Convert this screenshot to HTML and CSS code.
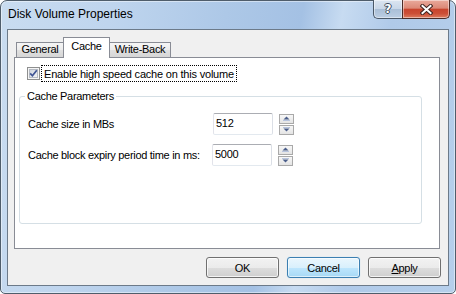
FILE: index.html
```html
<!DOCTYPE html>
<html lang="en">
<head>
<meta charset="utf-8">
<title>Disk Volume Properties</title>
<link rel="stylesheet" href="styles.css">
</head>
<body>
<div class="window">
  <div class="titlebar">
    <span class="title">Disk Volume Properties</span>
    <div class="caption">
      <div class="cbtn help"><span class="q">?</span></div>
      <div class="cbtn close">
        <svg width="13" height="11" viewBox="0 0 13 11">
          <path d="M2.5 2 L10.5 9 M10.5 2 L2.5 9" stroke="#3e2420" stroke-width="4" stroke-linecap="square" fill="none"/>
          <path d="M2.5 2 L10.5 9 M10.5 2 L2.5 9" stroke="#ffffff" stroke-width="2" stroke-linecap="square" fill="none"/>
        </svg>
      </div>
    </div>
  </div>
  <div class="client">
    <div class="tabctl">
      <div class="tabs">
        <div class="tab general">General</div>
        <div class="tab sel">Cache</div>
        <div class="tab wb">Write-Back</div>
      </div>
      <div class="page">
        <div class="check">
          <span class="cb">
            <svg width="13" height="13" viewBox="0 0 13 13">
              <defs>
                <linearGradient id="cbg" x1="0" y1="0" x2="1" y2="1">
                  <stop offset="0" stop-color="#cdd3dc"/>
                  <stop offset="1" stop-color="#f4f5f7"/>
                </linearGradient>
              </defs>
              <rect x="0.5" y="0.5" width="12" height="12" fill="#f5f5f5" stroke="#8e8f8f"/>
              <rect x="2.5" y="2.5" width="8" height="8" fill="url(#cbg)" stroke="#b5bac3"/>
              <path d="M3.2 6.4 L5.4 8.8 L9.8 3.2" stroke="#3f5494" stroke-width="1.7" fill="none"/>
            </svg>
          </span>
          <span class="cb-label">Enable high speed cache on this volume</span>
        </div>
        <div class="group">
          <span class="group-title">Cache Parameters</span>
          <div class="row">
            <span class="lbl">Cache size in MBs</span>
            <span class="edit">512</span>
            <div class="spin">
              <span class="spin-btn">
                <svg width="7" height="5" viewBox="0 0 7 5"><path d="M0.5 3.5 L3.5 0.5 L6.5 3.5 Z" fill="#4b5e8a"/><rect x="0" y="4" width="7" height="1" fill="#b7c4de"/></svg>
              </span>
              <span class="spin-btn">
                <svg width="7" height="5" viewBox="0 0 7 5"><rect x="0" y="0" width="7" height="1" fill="#b7c4de"/><path d="M0.5 1.5 L6.5 1.5 L3.5 4.5 Z" fill="#4b5e8a"/></svg>
              </span>
            </div>
          </div>
          <div class="row r2">
            <span class="lbl">Cache block expiry period time in ms:</span>
            <span class="edit">5000</span>
            <div class="spin">
              <span class="spin-btn">
                <svg width="7" height="5" viewBox="0 0 7 5"><path d="M0.5 3.5 L3.5 0.5 L6.5 3.5 Z" fill="#4b5e8a"/><rect x="0" y="4" width="7" height="1" fill="#b7c4de"/></svg>
              </span>
              <span class="spin-btn">
                <svg width="7" height="5" viewBox="0 0 7 5"><rect x="0" y="0" width="7" height="1" fill="#b7c4de"/><path d="M0.5 1.5 L6.5 1.5 L3.5 4.5 Z" fill="#4b5e8a"/></svg>
              </span>
            </div>
          </div>
        </div>
      </div>
    </div>
    <div class="buttons">
      <span class="btn">OK</span>
      <span class="btn default">Cancel</span>
      <span class="btn"><span class="u">A</span>pply</span>
    </div>
  </div>
</div>
</body>
</html>
```
FILE: styles.css
```css
* { box-sizing: border-box; }
html, body { margin: 0; padding: 0; background: #ffffff; }
body {
  font-family: "Liberation Sans", Arial, sans-serif;
  font-size: 11px;
  letter-spacing: -0.3px;
  color: #000;
}

.window {
  width: 456px;
  height: 294px;
  border: 1px solid #4f5d6b;
  border-radius: 7px 7px 5px 5px;
  background: linear-gradient(100deg, #c9dcf0 0%, #bfd5ee 22%, #adc8e7 45%, #a4c1e4 60%, #c7dbf1 68%, #b0cae9 78%, #b6cfeb 100%);
  box-shadow: inset 0 0 0 1px rgba(255,255,255,0.45);
  padding: 0 6px 7px 6px;
  display: flex;
  flex-direction: column;
}

.titlebar {
  height: 28px;
  display: flex;
  align-items: flex-start;
  flex: none;
}
.title {
  margin: 6px 0 0 1px;
  font-size: 12px;
  line-height: 15px;
  letter-spacing: 0;
}
.caption {
  margin: -1px -1px 0 auto;
  display: flex;
}
.cbtn {
  height: 19px;
  border: 1px solid #4a5868;
  border-top: 0;
  display: flex;
  align-items: center;
  justify-content: center;
  box-shadow: inset 0 0 0 1px rgba(255,255,255,0.45);
}
.help {
  width: 29px;
  border-right: 0;
  border-radius: 0 0 0 5px;
  background: linear-gradient(#dbe5f1 0%, #c9d7e8 48%, #aabfd7 52%, #bccee3 100%);
}
.q {
  font-family: "DejaVu Sans", sans-serif;
  font-weight: bold;
  font-size: 12px;
  line-height: 12px;
  color: #fff;
  letter-spacing: 0;
  text-shadow: 1px 0 #3d4b5c, -1px 0 #3d4b5c, 0 1px #3d4b5c, 0 -1px #3d4b5c;
}
.close {
  width: 48px;
  border-radius: 0 0 5px 0;
  border-color: #4a2c28;
  background: linear-gradient(#e9aa9c 0%, #dc8977 45%, #c8452e 52%, #cc4f37 75%, #dd7c5f 100%);
}

.client {
  height: 257px;
  border: 1px solid #6c7a89;
  background: #f0f0f0;
  display: flex;
  flex-direction: column;
  flex: none;
}

.tabctl {
  margin: 7px 0 0 6px;
  width: 426px;
}
.tabs {
  display: flex;
  align-items: flex-end;
  height: 20px;
  padding-left: 2px;
}
.tab {
  height: 15px;
  border: 1px solid #898c95;
  border-bottom: 0;
  background: linear-gradient(#f5f5f5 0%, #ececec 50%, #e0e0e0 51%, #d6d6d6 100%);
  text-align: center;
  line-height: 13px;
}
.tab.general { width: 47px; border-right: 0; }
.tab.sel {
  width: 47px;
  height: 21px;
  margin-bottom: -1px;
  padding-top: 2px;
  background: #ffffff;
  position: relative;
  z-index: 1;
}
.tab.wb { width: 61px; border-left: 0; }

.page {
  height: 192px;
  border: 1px solid #898c95;
  background: #ffffff;
  display: flex;
  flex-direction: column;
}

.check {
  display: flex;
  align-items: center;
  margin: 7px 0 0 12px;
}
.cb { width: 13px; height: 13px; margin-right: 1px; display: flex; }
.cb-label {
  border: 1px dotted #000;
  padding: 1px 2px 0 2px;
  line-height: 14px;
  letter-spacing: -0.2px;
}

.group {
  margin: 14px 0 0 4px;
  width: 403px;
  height: 128px;
  border: 1px solid #d5dfe5;
  border-radius: 3px;
  display: flex;
  flex-direction: column;
  padding-left: 8px;
}
.group-title {
  align-self: flex-start;
  margin: -7px 0 0 -3px;
  padding: 0 2px;
  background: #ffffff;
  line-height: 13px;
}
.row {
  display: flex;
  align-items: center;
  height: 22px;
  margin-top: 10px;
}
.row + .row { margin-top: 9px; }
.lbl { width: 185px; line-height: 13px; }
.r2 .lbl { width: 184px; }
.edit {
  width: 60px;
  height: 22px;
  border: 1px solid;
  border-color: #abadb3 #dbdfe6 #e3e9ef #e2e3ea;
  border-radius: 2px;
  padding-left: 2px;
  line-height: 19px;
  background: #fff;
}
.spin {
  margin-left: 6px;
  display: flex;
  flex-direction: column;
  gap: 1px;
}
.spin-btn {
  width: 15px;
  height: 10px;
  border: 1px solid #a9a9a9;
  background: linear-gradient(#f7f7f7, #e4e4e4);
  display: flex;
  align-items: center;
  justify-content: center;
}

.buttons {
  display: flex;
  justify-content: flex-end;
  gap: 8px;
  margin: 8px 7px 0 0;
}
.btn {
  width: 73px;
  height: 21px;
  border: 1px solid #707070;
  border-radius: 3px;
  background: linear-gradient(#f2f2f2 0%, #ebebeb 50%, #dddddd 51%, #cfcfcf 100%);
  box-shadow: inset 0 0 0 1px rgba(255,255,255,0.75);
  display: flex;
  align-items: center;
  justify-content: center;
  line-height: 13px;
  padding-top: 2px;
}
.btn.default {
  border-color: #3c7fb1;
  background: linear-gradient(#eaf6fd 0%, #d9f0fc 50%, #bee6fd 51%, #a7d9f5 100%);
  box-shadow: inset 0 0 0 1px rgba(255,255,255,0.6), 0 0 1px #9fd3f5;
}
.u { text-decoration: underline; }
```
